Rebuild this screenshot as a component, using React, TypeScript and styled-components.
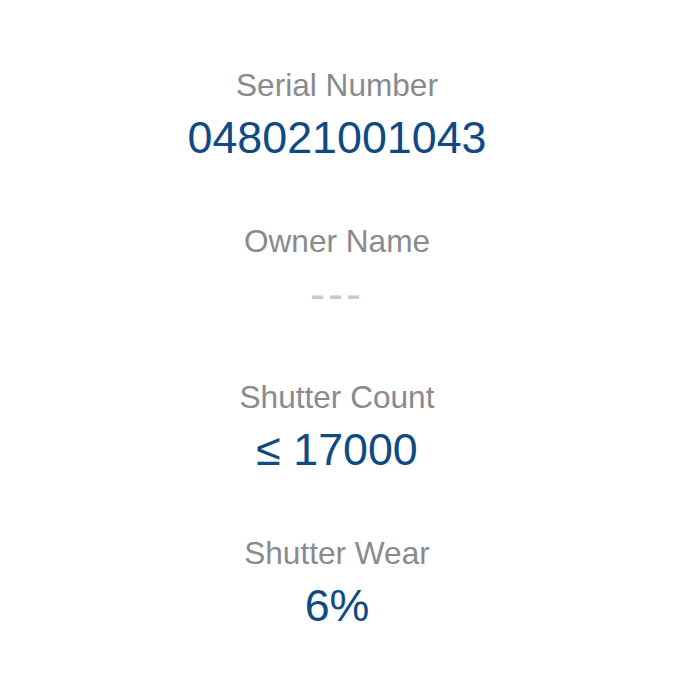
import React from 'react';
import styled, { createGlobalStyle } from 'styled-components';

type InfoItem = {
  label: string,
  value: string,
  empty?: boolean
}

const GlobalStyle = createGlobalStyle`
  html, body {
    margin: 0;
    padding: 0;
    background: #ffffff;
  }
`

const Page = styled.div`
  display: flex;
  flex-direction: column;
  align-items: center;
  gap: 52px;
  width: 674px;
  height: 674px;
  padding-top: 66px;
  box-sizing: border-box;
  background: #ffffff;
  overflow: hidden;
  font-family: 'Liberation Sans', Arial, sans-serif;
`

const Block = styled.div`
  display: flex;
  flex-direction: column;
  align-items: center;
`

const Label = styled.div`
  font-size: 31.6px;
  line-height: 38px;
  font-weight: 400;
  color: #8a8a8e;
  white-space: nowrap;
`

const Value = styled.div<{ $empty?: boolean }>`
  font-size: 44.8px;
  line-height: 66px;
  font-weight: 400;
  color: ${p => (p.$empty ? '#c9c9cc' : '#0f4a83')};
  letter-spacing: ${p => (p.$empty ? '3px' : '0')};
  white-space: nowrap;
`

const items: InfoItem[] = [
  { label: 'Serial Number', value: '048021001043' },
  { label: 'Owner Name', value: '---', empty: true },
  { label: 'Shutter Count', value: '≤ 17000' },
  { label: 'Shutter Wear', value: '6%' }
]

function App() {
  return (
    <>
      <GlobalStyle />
      <Page>
        {items.map(item => (
          <Block key={item.label}>
            <Label>{item.label}</Label>
            <Value $empty={item.empty}>{item.value}</Value>
          </Block>
        ))}
      </Page>
    </>
  );
}

export default App;
